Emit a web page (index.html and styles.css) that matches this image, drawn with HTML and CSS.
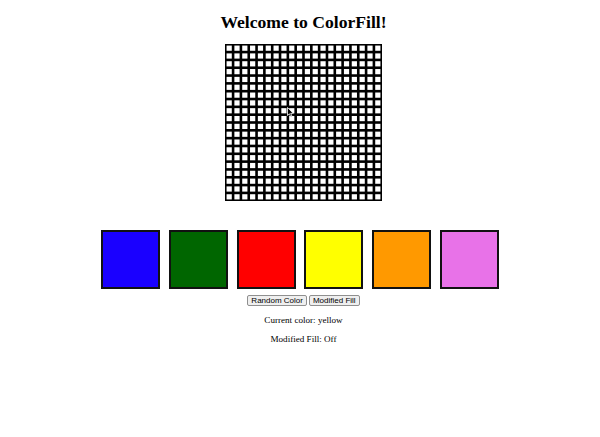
FILE: index.html
```html
<!DOCTYPE html>
<html lang="en">
<head>
<meta charset="utf-8">
<title>ColorFill</title>
<link rel="stylesheet" href="styles.css">
</head>
<body>
<main class="app">
  <h1 class="title">Welcome to ColorFill!</h1>
  <div class="board-wrap">
    <div class="board" id="board"></div>
    <svg class="cursor" width="7" height="11" viewBox="0 0 7 11" aria-hidden="true">
      <path d="M0.5 0.5 L0.5 8.5 L2.4 6.8 L3.8 10 L5 9.4 L3.7 6.3 L6.2 6.3 Z" fill="#000" stroke="#fff" stroke-width="0.8"/>
    </svg>
  </div>
  <div class="swatches">
    <div class="swatch blue"></div>
    <div class="swatch green"></div>
    <div class="swatch red"></div>
    <div class="swatch yellow"></div>
    <div class="swatch orange"></div>
    <div class="swatch violet"></div>
  </div>
  <div class="controls">
    <button class="btn" type="button">Random Color</button>
    <button class="btn" type="button">Modified Fill</button>
  </div>
  <p class="status">Current color: yellow</p>
  <p class="status">Modified Fill: Off</p>
</main>
<script src="script.js"></script>
</body>
</html>
```
FILE: styles.css
```css
html, body {
  margin: 0;
  padding: 0;
  background: #fff;
}
body {
  font-family: "Liberation Serif", "Times New Roman", serif;
  color: #000;
}
.app {
  display: flex;
  flex-direction: column;
  align-items: center;
  padding-left: 7px;
}
.title {
  font-size: 17.6px;
  font-weight: bold;
  margin: 12px 0 11px;
  line-height: 21px;
}
.board-wrap {
  position: relative;
  width: 157px;
  height: 157px;
}
.board {
  width: 301px;
  height: 301px;
  box-sizing: border-box;
  background: #000;
  padding: 3px;
  display: grid;
  grid-template-columns: repeat(20, 10px);
  grid-template-rows: repeat(20, 10px);
  gap: 5px;
  transform: scale(0.52159);
  transform-origin: 0 0;
}
.cell {
  background: #fff;
}
.cursor {
  position: absolute;
  left: 62px;
  top: 63px;
}
.swatches {
  display: flex;
  gap: 8.7px;
  margin: 29px 0 0 -7px;
}
.swatch {
  width: 59px;
  height: 59px;
  box-sizing: border-box;
  border: 2px solid #111;
}
.blue { background: #1a00ff; }
.green { background: #006600; }
.red { background: #ff0000; }
.yellow { background: #ffff00; }
.orange { background: #ff9900; }
.violet { background: #e872e8; }
.controls {
  display: flex;
  gap: 2px;
  margin-top: 6px;
}
.btn {
  font-family: "Liberation Sans", Arial, sans-serif;
  font-size: 8px;
  line-height: 9px;
  height: 11px;
  padding: 0 3px;
  background: #efefef;
  border: 1px solid #8f8f8f;
  border-radius: 2px;
  color: #000;
}
.status {
  font-size: 9.1px;
  line-height: 11px;
  margin: 8.5px 0 0;
}
```
FILE: script.js
```js
var board = document.getElementById('board');
for (var i = 0; i < 400; i++) {
  var c = document.createElement('div');
  c.className = 'cell';
  board.appendChild(c);
}
```
